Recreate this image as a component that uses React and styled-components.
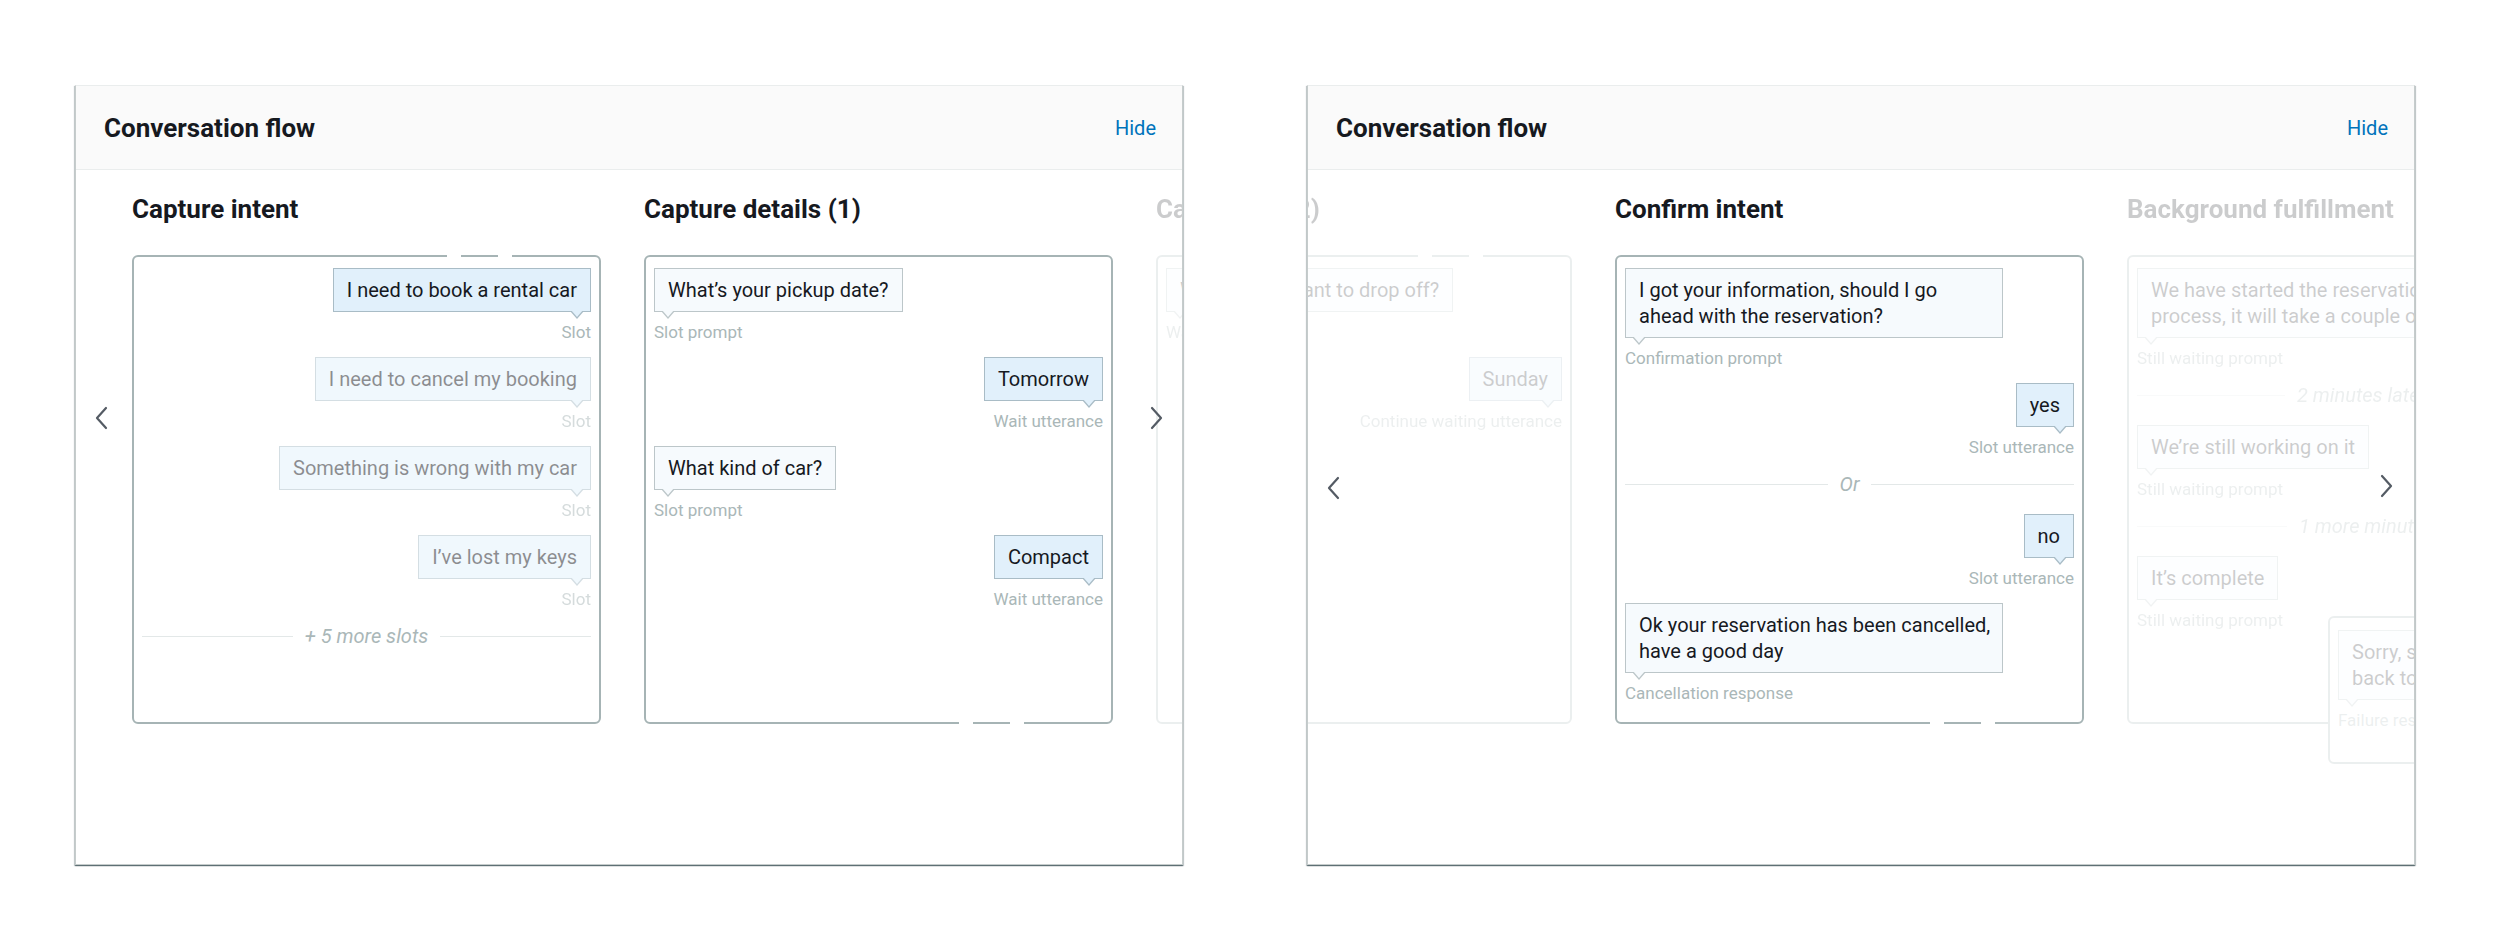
import React from "react";
import styled, { createGlobalStyle } from "styled-components";

const GlobalStyle = createGlobalStyle`
  html, body {
    margin: 0;
    background: #ffffff;
    font-family: Roboto, "Noto Sans", "Liberation Sans", sans-serif;
    color: #16191f;
  }
`;

const Page = styled.div`
  display: flex;
  gap: 124px;
  width: 2500px;
  height: 942px;
  padding: 85px 0 0 75px;
  box-sizing: border-box;
`;

const Panel = styled.section`
  position: relative;
  display: flex;
  flex-direction: column;
  flex: none;
  width: 1108px;
  height: 780px;
  box-sizing: border-box;
  background: #fff;
  border: 1px solid #c6cccc;
  border-top-color: #eaeded;
  box-shadow: 0 1px 1px 0 rgba(0, 28, 36, 0.45), 1px 1px 1px 0 rgba(0, 28, 36, 0.18),
    -1px 1px 1px 0 rgba(0, 28, 36, 0.18);
`;

const Header = styled.header`
  display: flex;
  align-items: center;
  justify-content: space-between;
  height: 84px;
  box-sizing: border-box;
  padding: 0 26px 0 28px;
  background: #fafafa;
  border-bottom: 1px solid #eaeded;
`;

const Title = styled.h2`
  margin: 0;
  font-size: 26px;
  font-weight: 700;
  color: #16191f;
`;

const HideLink = styled.a`
  font-size: 20px;
  color: #0073bb;
  text-decoration: none;
  cursor: pointer;
`;

const Body = styled.div`
  flex: 1;
  overflow: hidden;
  padding-top: 24px;
`;

const Track = styled.div`
  display: flex;
  gap: 43px;
  padding-left: 56px;
  transform: translateX(${(p) => p.$offset}px);
`;

const Column = styled.div`
  flex: none;
  width: 469px;
  opacity: ${(p) => (p.$faded ? 0.22 : 1)};
`;

const Heading = styled.h3`
  margin: 0 0 30px;
  font-size: 26px;
  line-height: 31px;
  font-weight: 700;
  white-space: nowrap;
`;

const gapStrip = `
  content: "";
  position: absolute;
  left: 313px;
  width: 65px;
  height: 2px;
  background: linear-gradient(to right, #fff 0 14px, transparent 14px 51px, #fff 51px 65px);
`;

const Card = styled.div`
  position: relative;
  display: flex;
  flex-direction: column;
  height: 469px;
  box-sizing: border-box;
  padding: 11px 8px;
  border: 2px solid #a6b4b5;
  border-radius: 6px;
  ${(p) => (p.$gapTop ? `&::before { ${gapStrip} top: -2px; }` : "")}
  ${(p) => (p.$gapBottom ? `&::after { ${gapStrip} bottom: -2px; }` : "")}
`;

const Item = styled.div`
  display: flex;
  flex-direction: column;
  align-items: ${(p) => (p.$side === "right" ? "flex-end" : "flex-start")};
  margin-bottom: 15px;
  opacity: ${(p) => (p.$dim ? 0.5 : 1)};
`;

const Bubble = styled.div`
  position: relative;
  padding: 8px 13px;
  font-size: 20px;
  line-height: 26px;
  white-space: nowrap;
  color: #16191f;
  width: ${(p) => (p.$width ? `${p.$width}px` : "auto")};
  box-sizing: border-box;
  background: ${(p) => (p.$side === "right" ? "#e1f0fb" : "#f6fafd")};
  border: 1px solid ${(p) => (p.$side === "right" ? "#a9bcc6" : "#bcc6c9")};

  &::before,
  &::after {
    content: "";
    position: absolute;
    ${(p) => (p.$side === "right" ? "right: 6px;" : "left: 6px;")}
    width: 0;
    height: 0;
    border-left: 7px solid transparent;
    border-right: 7px solid transparent;
  }
  &::before {
    bottom: -8px;
    border-top: 8px solid ${(p) => (p.$side === "right" ? "#a9bcc6" : "#bcc6c9")};
  }
  &::after {
    bottom: -6px;
    ${(p) => (p.$side === "right" ? "right: 7px;" : "left: 7px;")}
    border-left-width: 6px;
    border-right-width: 6px;
    border-top: 7px solid ${(p) => (p.$side === "right" ? "#e1f0fb" : "#f6fafd")};
  }
`;

const Label = styled.div`
  margin-top: 10px;
  font-size: 17px;
  line-height: 20px;
  color: #aab7b8;
  white-space: nowrap;
`;

const Divider = styled.div`
  display: flex;
  align-items: center;
  gap: 12px;
  margin: 2px 0 20px;
  font-size: 20px;
  line-height: 20px;
  font-style: italic;
  color: #aab7b8;
  white-space: nowrap;

  &::before,
  &::after {
    content: "";
    flex: 1;
    height: 1px;
    background: #e3e8e8;
  }
`;

const SideCard = styled.div`
  position: absolute;
  left: 199px;
  top: 359px;
  width: 320px;
  height: 148px;
  box-sizing: border-box;
  padding: 12px 8px;
  background: #fff;
  border: 2px solid #a6b4b5;
  border-radius: 6px;
`;

const Arrow = styled.button`
  position: absolute;
  left: ${(p) => p.$x - 7}px;
  top: ${(p) => p.$y - 12}px;
  width: 14px;
  height: 24px;
  padding: 0;
  border: 0;
  background: transparent;
  display: flex;
  align-items: center;
  justify-content: center;
  cursor: pointer;
`;

const Chevron = ({ dir }) => (
  <svg width="14" height="24" viewBox="0 0 14 24">
    <polyline
      points={dir === "left" ? "11,2 2,12 11,22" : "3,2 12,12 3,22"}
      fill="none"
      stroke="#545b64"
      strokeWidth="2.2"
      strokeLinecap="round"
      strokeLinejoin="round"
    />
  </svg>
);

const Row = ({ side, text, label, dim, width }) => (
  <Item $side={side} $dim={dim}>
    <Bubble $side={side} $width={width}>
      {text}
    </Bubble>
    <Label>{label}</Label>
  </Item>
);

const columns = [
  {
    title: "Capture intent",
    gapTop: true,
    body: (
      <>
        <Row side="right" text="I need to book a rental car" label="Slot" />
        <Row side="right" text="I need to cancel my booking" label="Slot" dim />
        <Row side="right" text="Something is wrong with my car" label="Slot" dim />
        <Row side="right" text="I’ve lost my keys" label="Slot" dim />
        <Divider>+ 5 more slots</Divider>
      </>
    ),
  },
  {
    title: "Capture details (1)",
    gapBottom: true,
    body: (
      <>
        <Row side="left" text="What’s your pickup date?" label="Slot prompt" />
        <Row side="right" text="Tomorrow" label="Wait utterance" />
        <Row side="left" text="What kind of car?" label="Slot prompt" />
        <Row side="right" text="Compact" label="Wait utterance" />
      </>
    ),
  },
  {
    title: "Capture details (2)",
    gapTop: true,
    body: (
      <>
        <Row side="left" text="Which day do you want to drop off?" label="Wait prompt" />
        <Row side="right" text="Sunday" label="Continue waiting utterance" />
      </>
    ),
  },
  {
    title: "Confirm intent",
    gapBottom: true,
    body: (
      <>
        <Row
          side="left"
          width={378}
          text={
            <>
              I got your information, should I go
              <br />
              ahead with the reservation?
            </>
          }
          label="Confirmation prompt"
        />
        <Row side="right" text="yes" label="Slot utterance" />
        <Divider>Or</Divider>
        <Row side="right" text="no" label="Slot utterance" />
        <Row
          side="left"
          width={378}
          text={
            <>
              Ok your reservation has been cancelled,
              <br />
              have a good day
            </>
          }
          label="Cancellation response"
        />
      </>
    ),
  },
  {
    title: "Background fulfillment",
    body: (
      <>
        <Row
          side="left"
          text={
            <>
              We have started the reservation
              <br />
              process, it will take a couple of minutes
            </>
          }
          label="Still waiting prompt"
        />
        <Divider>2 minutes later</Divider>
        <Row side="left" text="We’re still working on it" label="Still waiting prompt" />
        <Divider>1 more minute</Divider>
        <Row side="left" text="It’s complete" label="Still waiting prompt" />
        <SideCard>
          <Row
            side="left"
            text={
              <>
                Sorry, something went wrong, let me
                <br />
                back to the main menu
              </>
            }
            label="Failure response"
          />
        </SideCard>
      </>
    ),
  },
];

const FlowPanel = ({ offset, active, arrows }) => (
  <Panel>
    <Header>
      <Title>Conversation flow</Title>
      <HideLink>Hide</HideLink>
    </Header>
    <Body>
      <Track $offset={offset}>
        {columns.map((col, i) => (
          <Column key={col.title} $faded={!active.includes(i)}>
            <Heading>{col.title}</Heading>
            <Card $gapTop={col.gapTop} $gapBottom={col.gapBottom}>
              {col.body}
            </Card>
          </Column>
        ))}
      </Track>
    </Body>
    <Arrow $x={arrows.left[0]} $y={arrows.left[1]} aria-label="Previous">
      <Chevron dir="left" />
    </Arrow>
    <Arrow $x={arrows.right[0]} $y={arrows.right[1]} aria-label="Next">
      <Chevron dir="right" />
    </Arrow>
  </Panel>
);

export default function App() {
  return (
    <>
      <GlobalStyle />
      <Page>
        <FlowPanel offset={0} active={[0, 1]} arrows={{ left: [26, 332], right: [1080, 332] }} />
        <FlowPanel
          offset={-1285}
          active={[3]}
          arrows={{ left: [26, 402], right: [1078, 400] }}
        />
      </Page>
    </>
  );
}
